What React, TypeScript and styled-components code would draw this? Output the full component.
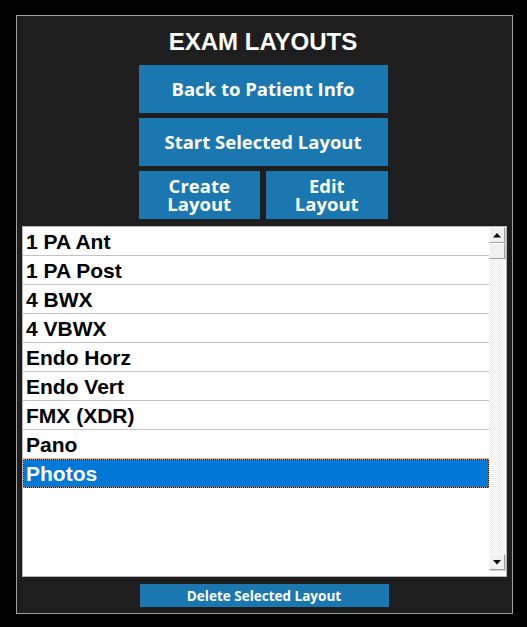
import React from "react";
import styled, { createGlobalStyle } from "styled-components";

const GlobalStyle = createGlobalStyle`
  html, body {
    margin: 0;
    padding: 0;
    background: #000;
  }
  * {
    box-sizing: border-box;
  }
`;

const Screen = styled.div`
  width: 527px;
  height: 627px;
  padding: 15px 0 0 16px;
  background: #000;
`;

const Panel = styled.section`
  width: 497px;
  height: 599px;
  border: 1px solid #a0a0a0;
  background: #1e1e1e;
  display: flex;
  flex-direction: column;
  align-items: center;
  padding-right: 3px;
`;

const Title = styled.h1`
  margin: 12px 0 0;
  height: 28px;
  line-height: 28px;
  font-family: "Liberation Sans", Arial, sans-serif;
  font-weight: 700;
  font-size: 24px;
  color: #fff;
`;

const ButtonStack = styled.div`
  width: 249px;
  margin-top: 9px;
  display: flex;
  flex-direction: column;
  gap: 5px;
`;

const ButtonRow = styled.div`
  display: flex;
  gap: 6px;

  & > button {
    flex: 1;
  }
`;

const ActionButton = styled.button<{ $small?: boolean }>`
  height: ${(p) => (p.$small ? "23px" : "48px")};
  border: none;
  padding: 0;
  background: #1b77b0;
  color: #fff;
  font-family: "Open Sans", "Noto Sans", sans-serif;
  font-weight: 700;
  font-size: ${(p) => (p.$small ? "13.5px" : "18.5px")};
  line-height: 18px;
  cursor: pointer;
`;

const DeleteButton = styled(ActionButton)`
  width: 249px;
  margin: 7px 0 0 2px;
`;

const ListBox = styled.div`
  align-self: flex-start;
  margin: 7px 0 0 5px;
  width: 485px;
  height: 351px;
  border: 1px solid #b4b4b4;
  background: #fff;
  display: flex;
  padding: 0 1px 6px 0;
`;

const Items = styled.ul`
  flex: 1;
  margin: 0;
  padding: 0;
  list-style: none;
`;

const Item = styled.li<{ $selected?: boolean }>`
  height: 29px;
  padding: 1px 0 0 3px;
  line-height: 28px;
  border-bottom: 1px solid #c3c3c3;
  font-family: "Liberation Sans", Arial, sans-serif;
  font-weight: 700;
  font-size: 21px;
  color: ${(p) => (p.$selected ? "#fff" : "#000")};
  background: ${(p) => (p.$selected ? "#0078d7" : "#fff")};
  ${(p) =>
    p.$selected &&
    `
    border-bottom: none;
    box-shadow: inset 0 0 0 1px #000;
    outline: 1px dotted #f39a3c;
    outline-offset: -1px;
  `}
`;

const ScrollBar = styled.div`
  width: 16px;
  display: flex;
  flex-direction: column;
`;

const ScrollButton = styled.div`
  width: 16px;
  height: 16px;
  flex: none;
  background: #f0f0f0;
  border-top: 1px solid #fff;
  border-left: 1px solid #fff;
  border-right: 1px solid #a0a0a0;
  border-bottom: 1px solid #a0a0a0;
  box-shadow: 1px 1px 0 #d4d4d4;
  display: flex;
  align-items: center;
  justify-content: center;
`;

const Track = styled.div`
  flex: 1;
  background: repeating-conic-gradient(#ececec 0 25%, #fff 0 50%) 0 0 / 2px 2px;
`;

const Arrow = ({ down }: { down?: boolean }) => (
  <svg width="8" height="5" viewBox="0 0 8 5">
    <polygon points={down ? "0,0 8,0 4,4.5" : "0,4.5 8,4.5 4,0"} fill="#000" />
  </svg>
);

const layouts = [
  "1 PA Ant",
  "1 PA Post",
  "4 BWX",
  "4 VBWX",
  "Endo Horz",
  "Endo Vert",
  "FMX (XDR)",
  "Pano",
  "Photos",
];

export default function App() {
  const selected = "Photos";
  return (
    <Screen>
      <GlobalStyle />
      <Panel>
        <Title>EXAM LAYOUTS</Title>
        <ButtonStack>
          <ActionButton>Back to Patient Info</ActionButton>
          <ActionButton>Start Selected Layout</ActionButton>
          <ButtonRow>
            <ActionButton>
              Create
              <br />
              Layout
            </ActionButton>
            <ActionButton>
              Edit
              <br />
              Layout
            </ActionButton>
          </ButtonRow>
        </ButtonStack>
        <ListBox>
          <Items>
            {layouts.map((name) => (
              <Item key={name} $selected={name === selected}>
                {name}
              </Item>
            ))}
          </Items>
          <ScrollBar>
            <ScrollButton>
              <Arrow />
            </ScrollButton>
            <ScrollButton />
            <Track />
            <ScrollButton>
              <Arrow down />
            </ScrollButton>
          </ScrollBar>
        </ListBox>
        <DeleteButton $small>Delete Selected Layout</DeleteButton>
      </Panel>
    </Screen>
  );
}
